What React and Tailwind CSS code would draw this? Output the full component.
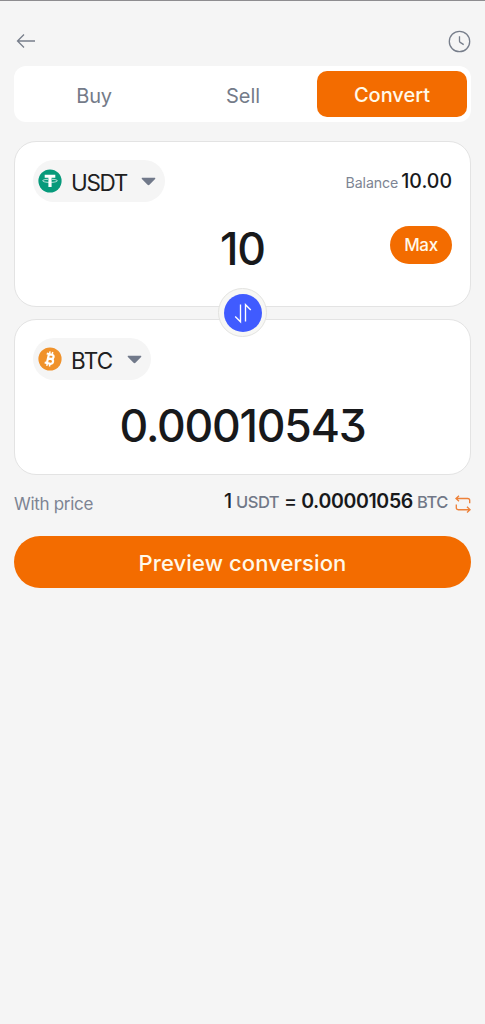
import React from "react";

function Caret() {
  return (
    <svg className="h-[9px] w-[15px] shrink-0" viewBox="0 0 15 9">
      <path d="M1.4.7h12.2c.7 0 1 .7.5 1.2L8.700 7.600c-.8.8-1.600.8-2.400 0L.900 1.900C.400 1.400.7.7 1.400.7Z" fill="#71798a" />
    </svg>
  );
}

function Tether() {
  return (
    <svg className="size-6 shrink-0" viewBox="0 0 24 24">
      <circle cx="12" cy="12" r="11.6" fill="#069a7b" />
      <path d="M6.700 5.800h10.600v2.900h-3.700v9.400h-3.200V8.700H6.700Z" fill="#fff" />
      <path d="M10 10.300c-3.200.1-5.300.7-5.300 1.500s3 1.600 7.300 1.600 7.300-.8 7.300-1.600-2.100-1.400-5.300-1.500" fill="none" stroke="#fff" strokeWidth=".7" />
    </svg>
  );
}

function Bitcoin() {
  return (
    <svg className="size-6 shrink-0" viewBox="0 0 24 24">
      <circle cx="12" cy="12" r="11.600" fill="#f0922b" />
      <g transform="rotate(13 12 12)" fill="none" stroke="#fff">
        <path d="M9.900 7.300v9.400M7.600 7.400h5.200c3 0 3 4.300 0 4.300H10m2.800 0c3.700 0 3.700 4.900 0 4.900H7.600" strokeWidth="2.200" />
        <path d="M10.400 4.600v2.500M13.100 4.600v2.500M10.400 16.900v2.500M13.100 16.900v2.500" strokeWidth="1.500" />
      </g>
    </svg>
  );
}

function TokenSelect({ icon, children, className }) {
  return (
    <button className={"flex h-[42px] items-center rounded-full bg-[#f5f5f5] pl-[5px] text-[22.5px] text-[#202020] " + className}>
      {icon}
      {children}
      <Caret />
    </button>
  );
}

export default function App() {
  return (
    <main className="min-h-screen border-t border-[#8e8d90] bg-[#f5f5f5] px-3.5 font-['Inter',sans-serif] text-[#18191b]">
      <header className="flex h-[65px] items-end justify-between pb-3">
        <svg className="mb-0.5 ml-0.5 h-[22px] w-5" viewBox="0 0 20 22" fill="none" stroke="#777e8b" strokeWidth="1.300">
          <path d="M19 11H1.500M8 4.500 1.500 11 8 17.500" />
        </svg>
        <svg className="size-6" viewBox="0 0 24 24" fill="none" stroke="#777e8b" strokeWidth="1.300">
          <circle cx="12.500" cy="11.500" r="10.200" />
          <path d="M12.500 6.300v4.900q0 .8.700 1.200l3.500 2.200" />
        </svg>
      </header>

      <nav className="grid h-14 grid-cols-[149px_149px_1fr] rounded-[12px] bg-white py-[5px] pr-1 pl-[5px] text-[20px] text-[#747b89]">
        <button className="pt-[3px] pl-[1px] tracking-[-0.3px]">Buy</button>
        <button className="pt-[3px] pl-[1px]">Sell</button>
        <button className="rounded-[10px] bg-[#f36c00] pt-[2px] font-medium text-[#fff9e9]">Convert</button>
      </nav>

      <section className="mt-[19px] h-[166px] rounded-[22px] border border-[#e3e3e3] bg-white px-[18px] pt-[18px]">
        <div className="flex h-[42px] items-center justify-between">
          <TokenSelect className="w-[132px]" icon={<Tether />}>
            <span className="ml-[9px] w-[70px] pt-[3px] text-left tracking-[-1.3px]">USDT</span>
          </TokenSelect>
          <p className="flex items-baseline gap-[3px] pt-[2px]">
            <span className="text-[14.2px] tracking-[-0.100px] text-[#7d8493]">Balance</span>
            <span className="text-[19.5px] font-medium">10.00</span>
          </p>
        </div>
        <div className="mt-6 grid h-[44px] grid-cols-[1fr_auto_1fr] items-center">
          <span />
          <span className="text-[44.5px] leading-[44px] font-medium tracking-[-1.2px]">10</span>
          <button className="mb-[7px] h-[38px] w-[62px] justify-self-end rounded-full bg-[#f36c00] pt-[2px] text-[17px] font-medium tracking-[-0.3px] text-[#fff9e9]">Max</button>
        </div>
      </section>

      <div className="relative flex h-3 items-center justify-center">
        <button className="mb-px flex size-[49px] shrink-0 items-center justify-center rounded-full border border-[#e3e3e0] bg-[#f7f7f5]">
          <svg className="size-[38px]" viewBox="0 0 38 38">
            <circle cx="19" cy="19" r="19" fill="#405bff" />
            <path d="M16.500 10.500v17.300l-5.300-5.300M21.500 27.500V10.700l5.300 5.300" fill="none" stroke="#fff" strokeWidth="1.350" />
          </svg>
        </button>
      </div>

      <section className="h-[156px] rounded-[22px] border border-[#e3e3e3] bg-white px-[18px] pt-[18px]">
        <TokenSelect className="w-[118px]" icon={<Bitcoin />}>
          <span className="ml-[9px] w-[56px] pt-[3px] text-left tracking-[-0.800px]">BTC</span>
        </TokenSelect>
        <p className="mt-[23px] text-center text-[44.5px] leading-[46px] font-medium tracking-[-1.2px] [font-feature-settings:'cv09']">0.00010543</p>
      </section>

      <div className="flex h-[61px] items-center justify-between pb-[3px]">
        <span className="pt-px text-[17px] tracking-[-0.300px] text-[#7d8493]">With price</span>
        <p className="flex items-center pb-[4px]">
          <span className="flex items-baseline whitespace-pre text-[16.5px] text-[#717887]">
            <span className="text-[19.5px] font-medium text-[#18191b]">1</span>
            <span className="ml-[4px] font-medium tracking-[-0.500px]">USDT</span>
            <span className="ml-[5px] mr-[4px] text-[19.5px] font-medium text-[#18191b]">=</span>
            <span className="text-[19.5px] font-semibold tracking-[-0.35px] text-[#18191b]">0.00001056</span>
            <span className="ml-1 font-medium tracking-[-0.400px]">BTC</span>
          </span>
          <svg className="mt-[3px] ml-[7px] h-[18px] w-4" viewBox="0 0 16 18" fill="none" stroke="#ed8139" strokeWidth="1.350">
            <path d="M4 .8 1 3.500l3 2.700M1 3.500h11.700q2 0 2 2v2.700M1.300 9.500v3.200q0 2 2 2H15M12 11.800l3 2.900-3 2.700" />
          </svg>
        </p>
      </div>

      <button className="h-[52px] w-full rounded-full bg-[#f36c00] pt-[3px] text-[22px] font-medium tracking-[0.1px] text-[#fff9e9]">Preview conversion</button>
    </main>
  );
}
